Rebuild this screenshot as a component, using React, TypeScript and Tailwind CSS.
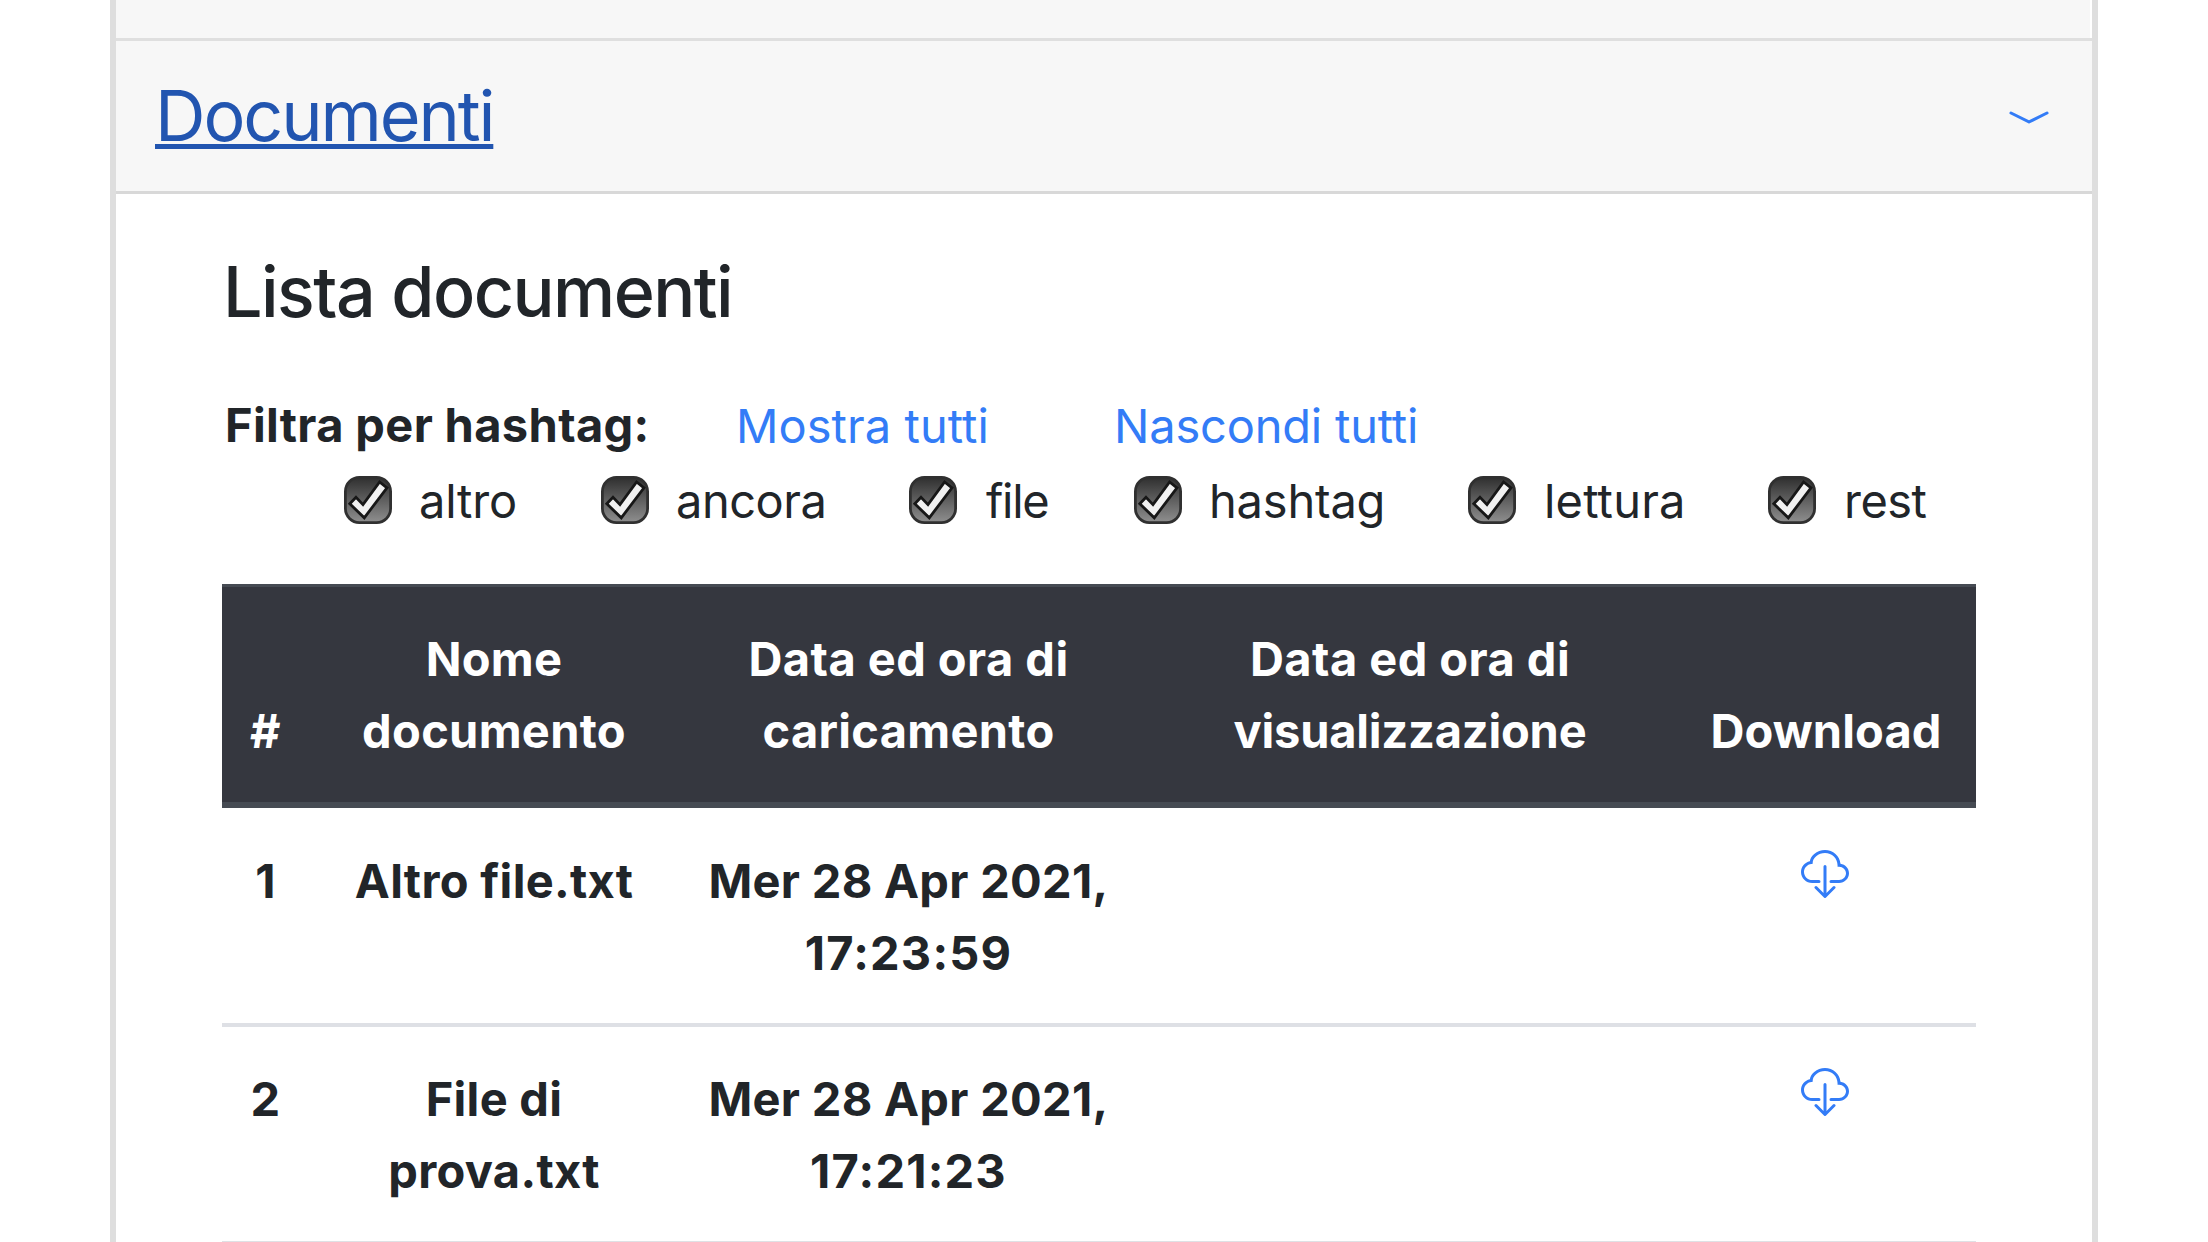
import { BsChevronCompactDown, BsCloudDownload } from "react-icons/bs";

const hashtags = [
  { name: "altro", label: "ml-[27px] tracking-[-0.2px] w-[182px]" },
  { name: "ancora", label: "ml-[27px] tracking-[-0.5px] w-[233px]" },
  { name: "file", label: "ml-[29px] tracking-[-1.3px] w-[148px]" },
  { name: "hashtag", label: "ml-[27px] tracking-[-0.2px] w-[259px]" },
  { name: "lettura", label: "ml-[28px] tracking-[0.2px] w-[224px]" },
  { name: "rest", label: "ml-[28px] tracking-[-0.5px]" },
];

const documents = [
  { id: 1, name: ["Altro file.txt"], date: "Mer 28 Apr 2021,", time: "17:23:59", padding: "pt-[37px] pb-[34px] border-b-4 border-[#dee0e5]" },
  { id: 2, name: ["File di", "prova.txt"], date: "Mer 28 Apr 2021,", time: "17:21:23", padding: "pt-9 pb-[34px] border-b-[3px] border-[#dfe1e5]" },
];

function CheckedBox() {
  return (
    <svg viewBox="0 0 48 48" className="mt-[11px] size-12 shrink-0">
      <defs>
        <linearGradient id="boxFill" x1="0" y1="0" x2="0" y2="1">
          <stop offset="0" stopColor="#2f2f2f" />
          <stop offset="1" stopColor="#8f8f8f" />
        </linearGradient>
      </defs>
      <rect x="1.4" y="1.4" width="45.2" height="45.2" rx="14" fill="url(#boxFill)" stroke="#303030" strokeWidth="2.8" />
      <path d="M5.8 27.8 L12 21.2 L19 28.6 L35.6 6 L43 11.8 L20.3 41.8 Z" fill="#f1f1f1" stroke="#171717" strokeWidth="2.8" />
    </svg>
  );
}

export default function App() {
  return (
    <div className="flex h-[1242px] justify-center overflow-hidden bg-white font-['Inter',sans-serif] text-[47px] leading-[72px] text-[#212529]">
      <div className="flex w-[1988px] flex-col border-x-[6px] border-[#dedede]">
        <div className="mr-0.5 h-[38px] shrink-0 bg-[#f7f7f7]" />
        <div className="flex h-[156px] shrink-0 items-start justify-between border-y-[3px] border-t-[#dfdfdf] border-b-[#d8d8d8] bg-[#f7f7f7] px-[39px]">
          <a className="mt-8 text-[70px] leading-[86px] tracking-[-2.1px] text-[#2255b0] underline decoration-[4.5px] underline-offset-[3px]">
            Documenti
          </a>
          <BsChevronCompactDown className="mt-[51px] size-12 text-[#337cf7]" />
        </div>

        <div className="pr-[116px] pl-[106px]">
          <h2 className="mt-[55px] ml-px text-[70px] leading-[86px] font-medium tracking-[-1.55px]">Lista documenti</h2>
          <div className="mt-[54px] ml-[3px] flex">
            <b className="w-[511px] tracking-[0.35px]">Filtra per hashtag:</b>
            <a className="mt-px -mb-px w-[378px] tracking-[0.05px] text-[#337cf7]">Mostra tutti</a>
            <a className="mt-px -mb-px tracking-[-0.2px] text-[#337cf7]">Nascondi tutti</a>
          </div>
          <div className="mt-1 ml-[122px] flex">
            {hashtags.map((tag) => (
              <label key={tag.name} className="flex">
                <CheckedBox />
                <span className={tag.label}>{tag.name}</span>
              </label>
            ))}
          </div>

          <table className="mt-[47px] w-[1754px] table-fixed border-separate border-spacing-0 text-center font-bold tracking-[0.3px]">
            <colgroup>
              <col className="w-[87px]" />
              <col className="w-[370px]" />
              <col className="w-[459px]" />
              <col className="w-[544px]" />
              <col className="w-[294px]" />
            </colgroup>
            <thead>
              <tr className="bg-[#35373f] align-bottom text-white">
                <th className="border-t-[3px] border-b-[6px] border-[#464b53] pt-9 pb-[35px]">#</th>
                <th className="border-t-[3px] border-b-[6px] border-[#464b53] pt-9 pb-[35px]">Nome<br />documento</th>
                <th className="border-t-[3px] border-b-[6px] border-[#464b53] pt-9 pb-[35px]">
                  <span className="tracking-[0.45px]">Data ed ora di</span><br />caricamento
                </th>
                <th className="border-t-[3px] border-b-[6px] border-[#464b53] pt-9 pb-[35px]">
                  <span className="tracking-[0.45px]">Data ed ora di</span><br />
                  <span className="tracking-[-0.22px]">visualizzazione</span>
                </th>
                <th className="border-t-[3px] border-b-[6px] border-[#464b53] pt-9 pr-[6px] pb-[35px] tracking-[0.12px]">Download</th>
              </tr>
            </thead>
            <tbody>
              {documents.map((doc) => (
                <tr key={doc.id} className="align-top">
                  <td className={doc.padding}>{doc.id}</td>
                  <td className={doc.padding}>
                    {doc.name.map((line) => <div key={line}>{line}</div>)}
                  </td>
                  <td className={doc.padding}>
                    <div>{doc.date}</div>
                    <div className="tracking-[1.2px]">{doc.time}</div>
                  </td>
                  <td className={doc.padding} />
                  <td className={doc.padding}>
                    <BsCloudDownload className="mt-[5px] mr-[127px] ml-auto size-12 text-[#337cf7]" />
                  </td>
                </tr>
              ))}
            </tbody>
          </table>
        </div>
      </div>
    </div>
  );
}
